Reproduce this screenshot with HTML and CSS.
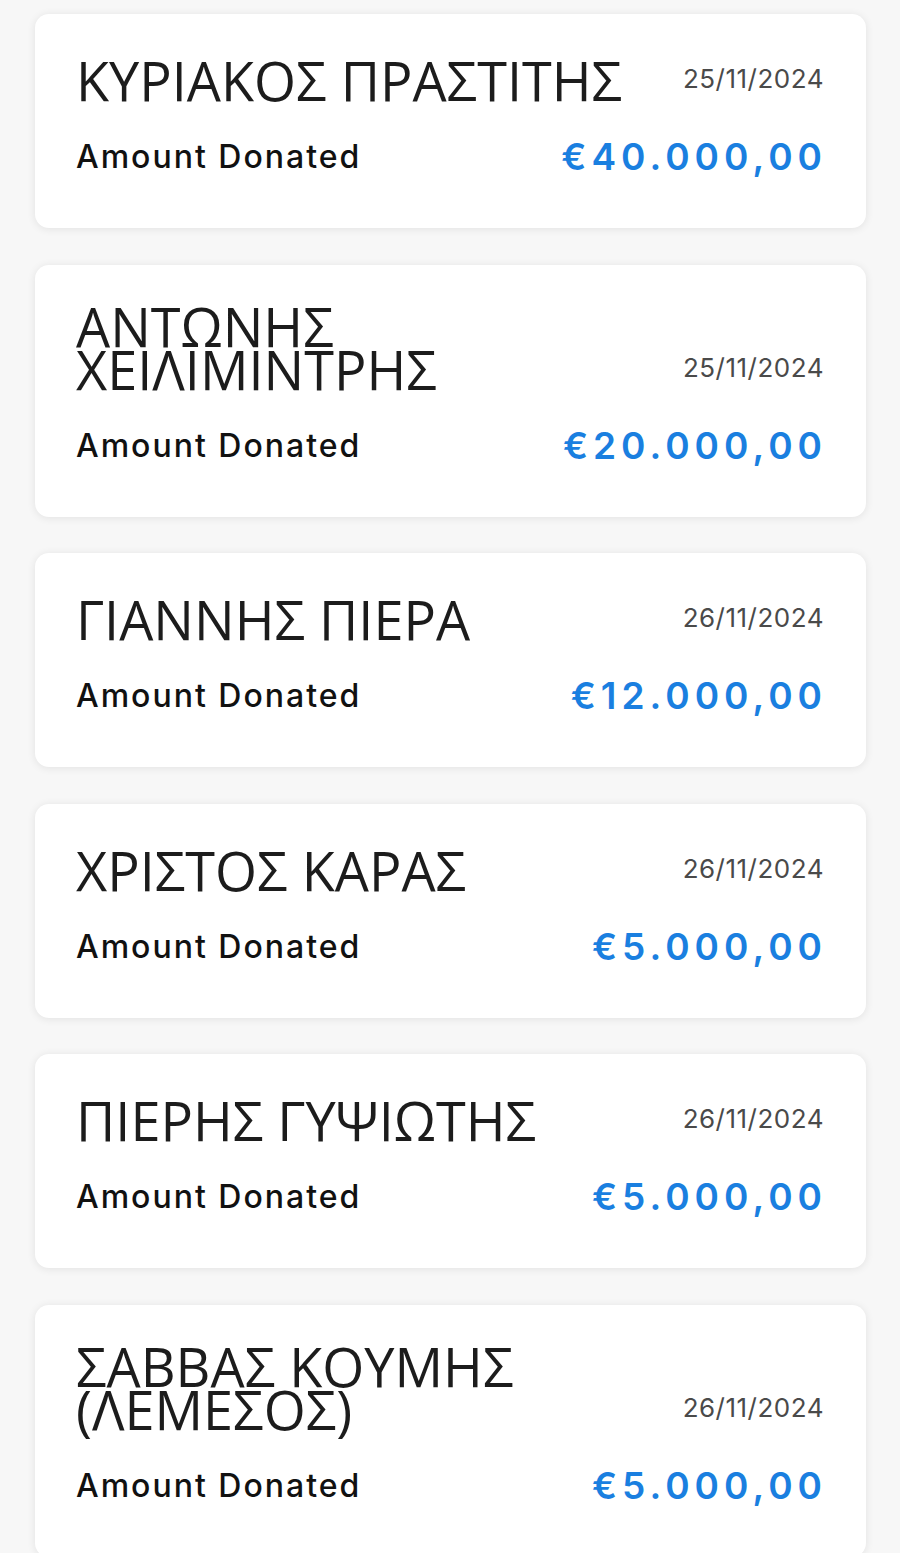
FILE: index.html
```html
<!DOCTYPE html>
<html lang="el">
<head>
    <meta charset="UTF-8">
    <meta name="viewport" content="width=device-width, initial-scale=1.0">
    <title>Donations</title>
    <link rel="stylesheet" href="styles.css">
</head>
<body>
    <div class="donations">

        <div class="donation-card">
            <div class="card-top">
                <div class="donor-name">ΚΥΡΙΑΚΟΣ ΠΡΑΣΤΙΤΗΣ</div>
                <div class="donation-date">25/11/2024</div>
            </div>
            <div class="card-bottom">
                <div class="amount-label">Amount Donated</div>
                <div class="amount-value">€40.000,00</div>
            </div>
        </div>

        <div class="donation-card">
            <div class="card-top">
                <div class="donor-name">ΑΝΤΩΝΗΣ<br>ΧΕΙΛΙΜΙΝΤΡΗΣ</div>
                <div class="donation-date">25/11/2024</div>
            </div>
            <div class="card-bottom">
                <div class="amount-label">Amount Donated</div>
                <div class="amount-value">€20.000,00</div>
            </div>
        </div>

        <div class="donation-card">
            <div class="card-top">
                <div class="donor-name">ΓΙΑΝΝΗΣ ΠΙΕΡΑ</div>
                <div class="donation-date">26/11/2024</div>
            </div>
            <div class="card-bottom">
                <div class="amount-label">Amount Donated</div>
                <div class="amount-value">€12.000,00</div>
            </div>
        </div>

        <div class="donation-card">
            <div class="card-top">
                <div class="donor-name">ΧΡΙΣΤΟΣ ΚΑΡΑΣ</div>
                <div class="donation-date">26/11/2024</div>
            </div>
            <div class="card-bottom">
                <div class="amount-label">Amount Donated</div>
                <div class="amount-value">€5.000,00</div>
            </div>
        </div>

        <div class="donation-card">
            <div class="card-top">
                <div class="donor-name">ΠΙΕΡΗΣ ΓΥΨΙΩΤΗΣ</div>
                <div class="donation-date">26/11/2024</div>
            </div>
            <div class="card-bottom">
                <div class="amount-label">Amount Donated</div>
                <div class="amount-value">€5.000,00</div>
            </div>
        </div>

        <div class="donation-card">
            <div class="card-top">
                <div class="donor-name">ΣΑΒΒΑΣ ΚΟΥΜΗΣ<br>(ΛΕΜΕΣΟΣ)</div>
                <div class="donation-date">26/11/2024</div>
            </div>
            <div class="card-bottom">
                <div class="amount-label">Amount Donated</div>
                <div class="amount-value">€5.000,00</div>
            </div>
        </div>

    </div>
</body>
</html>
```

FILE: styles.css
```css
body {
    font-family: 'Inter', 'Noto Sans', sans-serif;
    background-color: #f7f7f7;
    margin: 0;
    padding: 0;
}

.donations {
    display: flex;
    flex-direction: column;
    gap: 36.5px;
    padding: 14px 34px 0 35px;
}

.donation-card {
    background-color: #fff;
    border-radius: 14px;
    box-shadow: 0 1px 8px rgba(0, 0, 0, 0.09);
    padding: 40px 42px 49px 41px;
}

.card-top {
    display: flex;
    justify-content: space-between;
    align-items: flex-end;
    min-height: 48px;
}

.donor-name {
    font-family: 'Open Sans', sans-serif;
    font-size: 54px;
    line-height: 43px;
    color: #1c1c1c;
}

.donation-date {
    font-size: 26px;
    letter-spacing: 0.5px;
    color: #4a4a4a;
    line-height: 30px;
    padding-bottom: 8px;
}

.card-bottom {
    display: flex;
    justify-content: space-between;
    align-items: center;
    margin-top: 32px;
}

.amount-label {
    font-size: 32px;
    font-weight: 500;
    letter-spacing: 2px;
    color: #111;
}

.amount-value {
    font-size: 37px;
    font-weight: 600;
    letter-spacing: 5px;
    margin-right: -3px;
    color: #1a7fe0;
}
```
